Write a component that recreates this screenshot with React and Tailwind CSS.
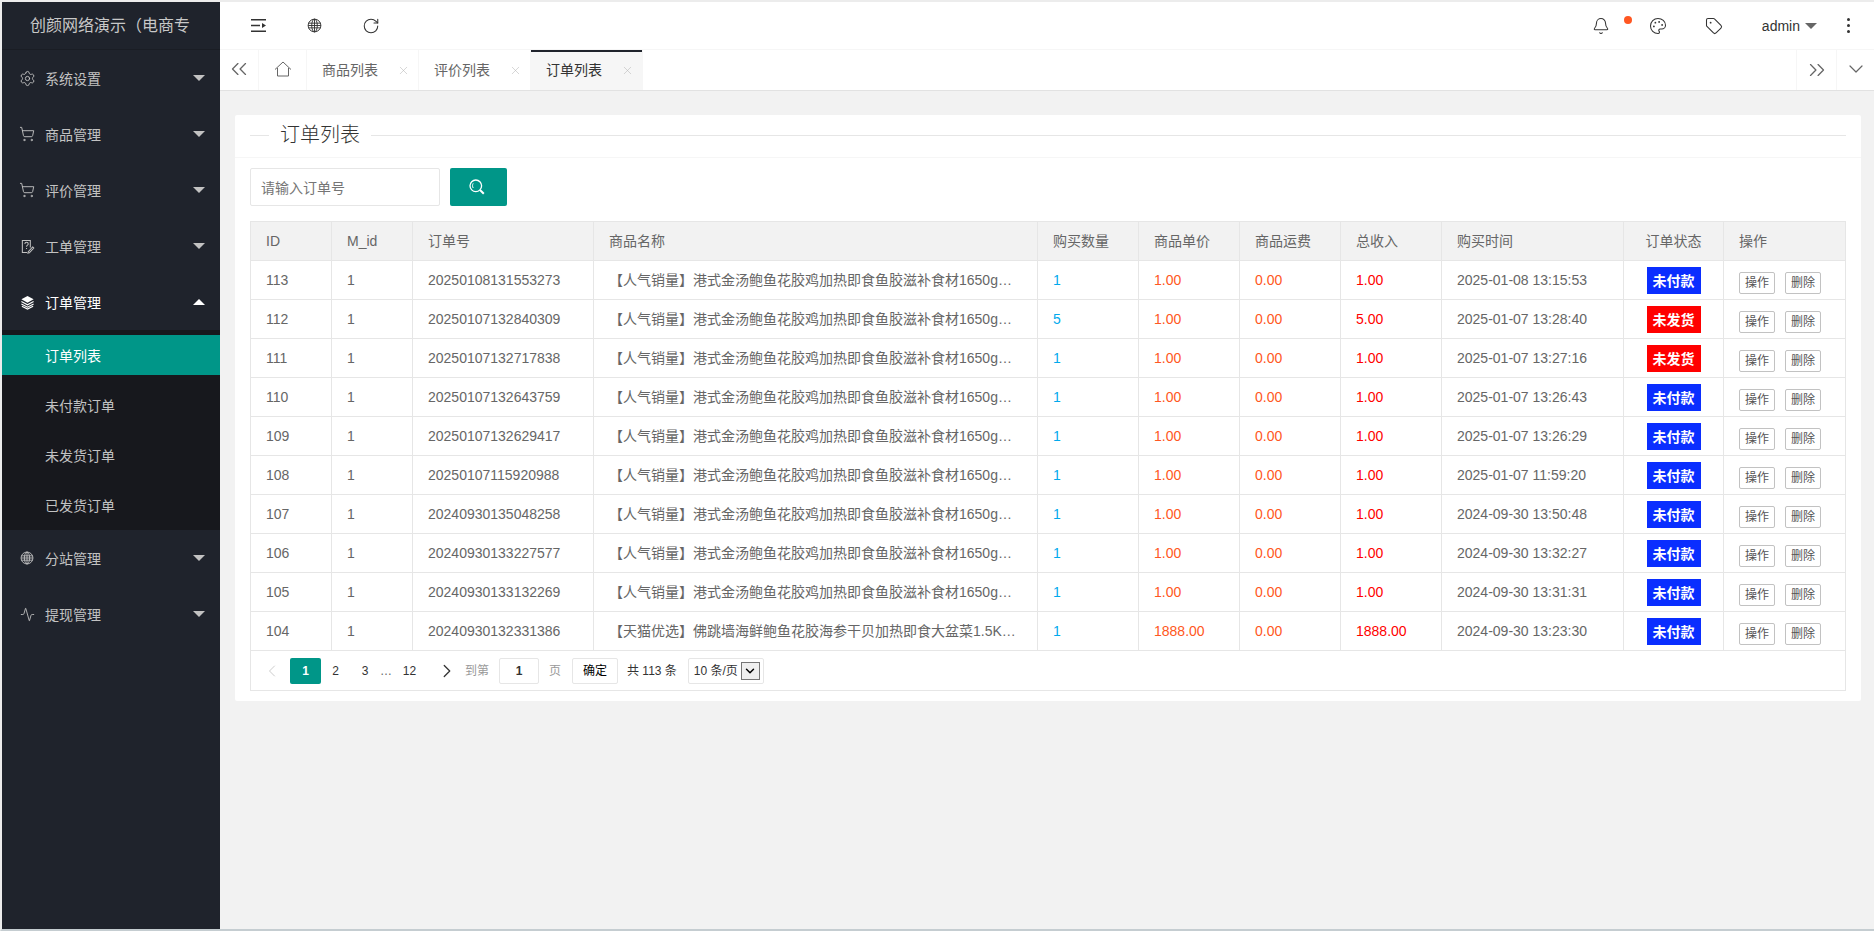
import React from 'react'
import { Settings, ShoppingCart, Activity, Bell, Palette, Tag, RotateCw, ChevronsLeft, ChevronsRight, ChevronDown, ChevronLeft, ChevronRight, X } from 'lucide-react'

const GlobeIcon = ({ className }) => (
  <svg viewBox="0 0 16 16" fill="none" stroke="currentColor" strokeWidth="1" className={className}>
    <circle cx="8" cy="8" r="6.8" />
    <ellipse cx="8" cy="8" rx="3" ry="6.8" />
    <path d="M8 1v14M1.5 5.5h13M1.2 8h13.6M1.5 10.5h13" />
  </svg>
)

const LayersIcon = ({ className }) => (
  <svg viewBox="0 0 16 16" fill="currentColor" className={className}>
    <path d="M8 1l6.5 3.6L8 8.2 1.5 4.6z" />
    <path d="M1.5 7l6.5 3.5L14.5 7M1.5 9.5L8 13l6.5-3.5M2 12l6 3 6-3" fill="none" stroke="currentColor" strokeWidth="1.2" />
  </svg>
)

const TicketIcon = ({ className }) => (
  <svg viewBox="0 0 16 16" fill="none" stroke="currentColor" strokeWidth="1.1" className={className}>
    <path d="M11 9V1.5H2.5v13h5" />
    <path d="M5.2 5.2c0-2.2 3.6-2.2 3.6 0 0 1.4-1.8 1.4-1.8 3M7 9.6v1" />
    <path d="M13.5 8.5l1.2 1.2-4.7 5-1.6.4.4-1.6z" />
  </svg>
)

const MenuFoldIcon = ({ className }) => (
  <svg viewBox="0 0 15 13" fill="currentColor" className={className}>
    <path d="M0 0h15v1.6H0zM0 5.7h9v1.6H0zM0 11.4h15V13H0zM11 3.9l4 2.6-4 2.6z" />
  </svg>
)

const HomeIcon = ({ className }) => (
  <svg viewBox="0 0 18 16" fill="none" stroke="currentColor" strokeWidth="1" className={className}>
    <path d="M1 8.5L9 1l8 7.5M3.5 7v8h11V7" />
  </svg>
)

const SearchIcon = ({ className }) => (
  <svg viewBox="0 0 16 16" fill="none" stroke="currentColor" className={className}>
    <circle cx="6.8" cy="6.8" r="5.8" strokeWidth="1.3" />
    <path d="M4.2 4.4c-.9 1.3-.9 3.2 0 4.6" strokeWidth="1" />
    <path d="M11 11l3.8 3.8" strokeWidth="2" />
  </svg>
)

const menus = [
  { name: '系统设置', icon: <Settings size={17} strokeWidth={1.3} className="shrink-0" /> },
  { name: '商品管理', icon: <ShoppingCart size={16} strokeWidth={1.4} className="shrink-0" /> },
  { name: '评价管理', icon: <ShoppingCart size={16} strokeWidth={1.4} className="shrink-0" /> },
  { name: '工单管理', icon: <TicketIcon className="w-[15px] h-[15px] shrink-0" /> },
]

const subMenus = ['订单列表', '未付款订单', '未发货订单', '已发货订单']

const NAME_A = '【人气销量】港式金汤鲍鱼花胶鸡加热即食鱼胶滋补食材1650g礼盒'
const NAME_B = '【天猫优选】佛跳墙海鲜鲍鱼花胶海参干贝加热即食大盆菜1.5Kg礼'

const orders = [
  [113, '20250108131553273', NAME_A, 1, '1.00', '1.00', '2025-01-08 13:15:53', 0],
  [112, '20250107132840309', NAME_A, 5, '1.00', '5.00', '2025-01-07 13:28:40', 1],
  [111, '20250107132717838', NAME_A, 1, '1.00', '1.00', '2025-01-07 13:27:16', 1],
  [110, '20250107132643759', NAME_A, 1, '1.00', '1.00', '2025-01-07 13:26:43', 0],
  [109, '20250107132629417', NAME_A, 1, '1.00', '1.00', '2025-01-07 13:26:29', 0],
  [108, '20250107115920988', NAME_A, 1, '1.00', '1.00', '2025-01-07 11:59:20', 0],
  [107, '20240930135048258', NAME_A, 1, '1.00', '1.00', '2024-09-30 13:50:48', 0],
  [106, '20240930133227577', NAME_A, 1, '1.00', '1.00', '2024-09-30 13:32:27', 0],
  [105, '20240930133132269', NAME_A, 1, '1.00', '1.00', '2024-09-30 13:31:31', 0],
  [104, '20240930132331386', NAME_B, 1, '1888.00', '1888.00', '2024-09-30 13:23:30', 0],
]

const heads = ['ID', 'M_id', '订单号', '商品名称', '购买数量', '商品单价', '商品运费', '总收入', '购买时间', '订单状态', '操作']
const colWidths = ['w-[80px]', 'w-[81px]', 'w-[181px]', 'w-[444px]', 'w-[101px]', 'w-[101px]', 'w-[101px]', 'w-[101px]', 'w-[182px]', 'w-[100px]', 'w-[122px]']

function Caret({ up }) {
  return (
    <span className={`w-0 h-0 border-x-[6px] border-x-transparent ${up ? 'border-b-[6px] border-b-white' : 'border-t-[6px] border-t-[#c2c2c2]'}`} />
  )
}

function MenuItem({ name, icon, open }) {
  return (
    <div className={`h-[56px] flex items-center pl-[18px] pr-[15px] text-sm ${open ? 'text-white' : 'text-[#c2c2c2]'}`}>
      <span className="w-[14px] h-[14px] flex items-center justify-center">{icon}</span>
      <span className="ml-[11px] pt-[2px] flex-1">{name}</span>
      <Caret up={open} />
    </div>
  )
}

function Sidebar() {
  return (
    <aside className="w-[218px] shrink-0 bg-[#1f232c] flex flex-col">
      <div className="h-[48px] border-b border-[#1a1d24] flex items-center pl-[28px]">
        <div className="w-[160px] overflow-hidden whitespace-nowrap text-base text-[#c8c8c8]">创颜网络演示（电商专</div>
      </div>
      {menus.map((m) => <MenuItem key={m.name} name={m.name} icon={m.icon} />)}
      <MenuItem name="订单管理" icon={<LayersIcon className="w-[15px] h-[15px] shrink-0" />} open />
      <div className="bg-[#17181d]">
        {subMenus.map((s, i) => (
          <div key={s} className="h-[50px] py-[5px]">
            <div className={`h-[40px] flex items-center pl-[43px] pt-[2px] text-sm ${i === 0 ? 'bg-[#009688] text-white' : 'text-[#c2c2c2]'}`}>{s}</div>
          </div>
        ))}
      </div>
      <MenuItem name="分站管理" icon={<GlobeIcon className="w-[14px] h-[14px] shrink-0" />} />
      <MenuItem name="提现管理" icon={<Activity size={15} strokeWidth={1.4} className="shrink-0" />} />
    </aside>
  )
}

function TopBar() {
  return (
    <div className="h-[48px] shrink-0 bg-white border-b border-[#f6f6f6] flex items-center text-[#333]">
      <MenuFoldIcon className="w-[15px] h-[13px] ml-[31px]" />
      <GlobeIcon className="w-[15px] h-[15px] ml-[41px]" />
      <RotateCw size={18} strokeWidth={1.4} className="ml-[40px]" />
      <div className="ml-auto flex items-center">
        <div className="relative">
          <Bell size={18} strokeWidth={1.4} />
          <span className="absolute top-[-1px] left-[32px] w-[8px] h-[8px] rounded-full bg-[#ff5722]" />
        </div>
        <Palette size={18} strokeWidth={1.4} className="ml-[39px]" />
        <Tag size={18} strokeWidth={1.4} className="ml-[38px]" />
        <span className="ml-[39px] text-sm leading-none">admin</span>
        <span className="ml-[5px] w-0 h-0 border-x-[6px] border-x-transparent border-t-[6px] border-t-[#666]" />
        <span className="ml-[30px] mr-[24px] flex flex-col gap-[3px]">
          <i className="block w-[3px] h-[3px] rounded-full bg-[#333]" />
          <i className="block w-[3px] h-[3px] rounded-full bg-[#333]" />
          <i className="block w-[3px] h-[3px] rounded-full bg-[#333]" />
        </span>
      </div>
    </div>
  )
}

function PageTab({ label, active }) {
  return (
    <div className={`relative w-[112px] h-[40px] flex items-center pl-[15px] border-r border-[#f6f6f6] text-sm ${active ? 'bg-[#f6f6f6] text-[#333]' : 'text-[#666]'}`}>
      {active && <span className="absolute left-0 right-0 top-0 h-[2px] bg-[#1f232c]" />}
      <span>{label}</span>
      <X size={13} strokeWidth={1} className="ml-[19px] text-[#b5b5b5]" />
    </div>
  )
}

function TabBar() {
  return (
    <div className="h-[41px] shrink-0 bg-white border-b border-[#e2e2e2] flex items-stretch">
      <div className="w-[39px] flex items-center justify-center border-r border-[#f6f6f6] text-[#666]">
        <ChevronsLeft size={26} strokeWidth={1.2} className="-mt-[3px]" />
      </div>
      <div className="w-[48px] flex items-center justify-center border-r border-[#f6f6f6] text-[#666]">
        <HomeIcon className="w-[18px] h-[16px] -mt-[3px]" />
      </div>
      <PageTab label="商品列表" />
      <PageTab label="评价列表" />
      <PageTab label="订单列表" active />
      <div className="ml-auto w-[40px] flex items-center justify-center border-l border-[#f6f6f6] text-[#666]">
        <ChevronsRight size={26} strokeWidth={1.2} className="-mt-[1px]" />
      </div>
      <div className="w-[38px] flex items-center justify-center border-l border-[#f6f6f6] text-[#666]">
        <ChevronDown size={24} strokeWidth={1.2} className="-mt-[3px]" />
      </div>
    </div>
  )
}

const cell = 'h-[39px] p-0 px-[15px] border-b border-l border-[#e6e6e6] text-sm overflow-hidden whitespace-nowrap text-ellipsis'

function OrderRow({ row }) {
  const [id, no, name, qty, price, total, time, status] = row
  return (
    <tr>
      <td className={`${cell} border-l-0 text-[#666]`}>{id}</td>
      <td className={`${cell} text-[#666]`}>1</td>
      <td className={`${cell} text-[#666]`}>{no}</td>
      <td className={`${cell} text-[#666]`}>{name}</td>
      <td className={`${cell} text-[#01aaed]`}>{qty}</td>
      <td className={`${cell} text-[#ff5722]`}>{price}</td>
      <td className={`${cell} text-[#ff5722]`}>0.00</td>
      <td className={`${cell} text-[#ff0000]`}>{total}</td>
      <td className={`${cell} text-[#666]`}>{time}</td>
      <td className={`${cell} text-center`}>
        <span className={`inline-block w-[54px] h-[27px] leading-[28px] align-middle font-bold text-white ${status ? 'bg-[#ff0000]' : 'bg-[#0a2eff]'}`}>
          {status ? '未发货' : '未付款'}
        </span>
      </td>
      <td className={`${cell} text-[#666]`}>
        <div className="flex gap-[10px] pt-[6px]">
          <span className="w-[36px] h-[22px] flex items-center justify-center border border-[#c2c2c2] rounded-[2px] text-xs text-[#555]">操作</span>
          <span className="w-[36px] h-[22px] flex items-center justify-center border border-[#c2c2c2] rounded-[2px] text-xs text-[#555]">删除</span>
        </div>
      </td>
    </tr>
  )
}

function Pagination() {
  return (
    <div className="h-[39px] flex items-center text-xs text-[#333]">
      <ChevronLeft size={20} strokeWidth={1} className="ml-[11px] text-[#c2c2c2]" />
      <span className="ml-[8px] w-[31px] h-[26px] flex items-center justify-center rounded-[2px] bg-[#009688] text-white font-bold">1</span>
      <span className="w-[29px] text-center">2</span>
      <span className="w-[30px] text-center">3</span>
      <span className="w-[11px] text-center text-[#666]">…</span>
      <span className="ml-[5px] w-[27px] text-center">12</span>
      <ChevronRight size={22} strokeWidth={1.4} className="ml-[13px]" />
      <span className="ml-[7px] text-[#999]">到第</span>
      <span className="ml-[10px] w-[40px] h-[26px] flex items-center justify-center border border-[#e6e6e6] rounded-[2px] font-bold">1</span>
      <span className="ml-[10px] text-[#999]">页</span>
      <span className="ml-[11px] w-[46px] h-[26px] flex items-center justify-center border border-[#e6e6e6] rounded-[2px] text-black">确定</span>
      <span className="ml-[9px]">共 113 条</span>
      <div className="ml-[11px] w-[76px] h-[26px] flex items-center border border-[#e6e6e6] rounded-[2px] pl-[5px]">
        <span className="flex-1">10 条/页</span>
        <span className="mr-[3px] w-[19px] h-[18px] flex items-center justify-center bg-[#efefef] border border-[#767676]">
          <ChevronDown size={14} strokeWidth={2.5} className="text-black" />
        </span>
      </div>
    </div>
  )
}

function OrderCard() {
  return (
    <div className="bg-white rounded-[2px]">
      <div className="h-[43px] pb-[2px] border-b border-[#f6f6f6] flex items-center px-[15px]">
        <span className="w-[19px] h-px bg-[#e6e6e6]" />
        <span className="mx-[11px] text-xl text-[#333] leading-none font-light">订单列表</span>
        <span className="flex-1 h-px bg-[#e6e6e6]" />
      </div>
      <div className="px-[15px] pt-[10px] pb-[10px]">
        <div className="flex items-stretch gap-[10px] h-[38px]">
          <div className="w-[190px] border border-[#e6e6e6] rounded-[2px] flex items-center pl-[10px] pt-[2px] text-sm text-[#757575]">请输入订单号</div>
          <div className="w-[57px] bg-[#009688] rounded-[2px] flex items-center justify-center pr-[4px] text-white">
            <SearchIcon className="w-[16px] h-[16px]" />
          </div>
        </div>
        <div className="mt-[15px] border border-[#e6e6e6]">
          <table className="w-full table-fixed border-separate border-spacing-0">
            <colgroup>
              {colWidths.map((w, i) => <col key={i} className={w} />)}
            </colgroup>
            <thead>
              <tr>
                {heads.map((h, i) => (
                  <th key={h} className={`h-[39px] p-0 px-[15px] bg-[#f2f2f2] border-b border-[#e6e6e6] text-sm font-normal text-[#666] ${i === 0 ? '' : 'border-l'} ${i === 9 ? 'text-center' : 'text-left'}`}>{h}</th>
                ))}
              </tr>
            </thead>
            <tbody>
              {orders.map((o) => <OrderRow key={o[0]} row={o} />)}
            </tbody>
          </table>
          <Pagination />
        </div>
      </div>
    </div>
  )
}

export default function App() {
  return (
    <div className="w-[1874px] h-[931px] overflow-hidden flex border-t-2 border-l-2 border-b-2 border-t-[#ececec] border-l-[#ececec] border-b-[#c5cdd1] bg-[#f2f2f2] font-['Liberation_Sans','Noto_Sans_CJK_SC',sans-serif]">
      <Sidebar />
      <div className="flex-1 min-w-0 flex flex-col">
        <TopBar />
        <TabBar />
        <main className="flex-1 pt-[24px] pl-[15px] pr-[13px]">
          <OrderCard />
        </main>
      </div>
    </div>
  )
}
